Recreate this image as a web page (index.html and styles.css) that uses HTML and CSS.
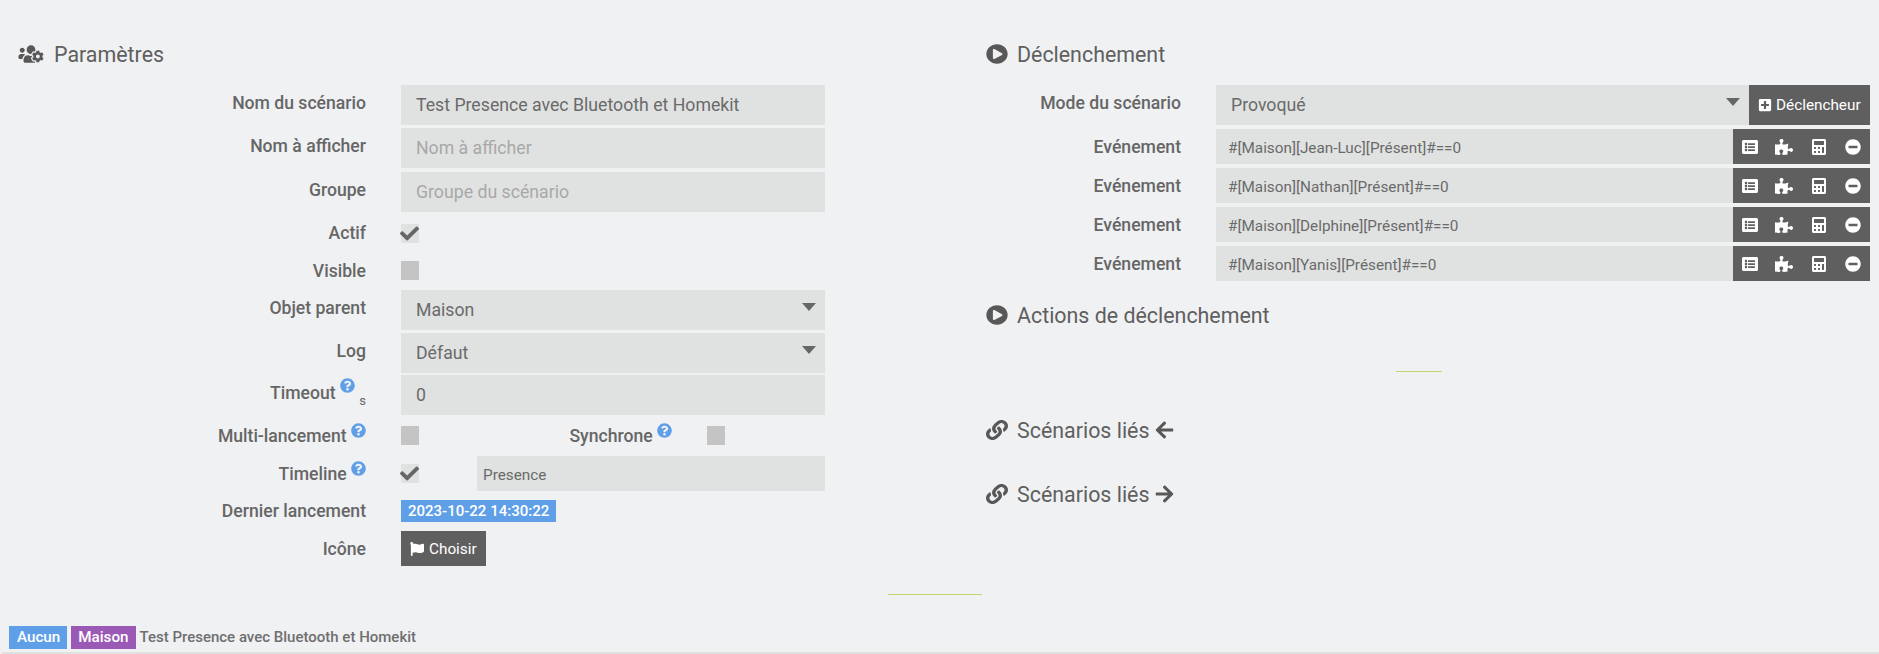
FILE: index.html
```html
<!DOCTYPE html>
<html lang="fr">
<head>
<meta charset="utf-8">
<title>Scénario</title>
<link rel="stylesheet" href="styles.css">
</head>
<body>
<svg class="sprite" xmlns="http://www.w3.org/2000/svg">
<symbol id="i-users-cog" viewBox="0 0 640 512"><path d="M610.5 341.3c2.6-14.1 2.6-28.5 0-42.6l25.8-14.9c3-1.7 4.3-5.2 3.3-8.5-6.7-21.5-18.2-41-33.2-57.1-2.3-2.5-6-3.1-9-1.4l-25.8 14.9c-10.9-9.3-23.4-16.5-36.9-21.3v-29.8c0-3.4-2.4-6.4-5.7-7.1-22.3-5-45-4.8-66.2 0-3.3.7-5.7 3.7-5.7 7.1v29.8c-13.5 4.8-26 12-36.9 21.3l-25.8-14.9c-2.9-1.7-6.7-1.1-9 1.4-15 16.1-26.5 35.6-33.2 57.1-1 3.3.4 6.8 3.3 8.5l25.8 14.9c-2.6 14.1-2.6 28.5 0 42.6l-25.8 14.9c-3 1.7-4.3 5.2-3.3 8.5 6.7 21.5 18.2 41 33.2 57.1 2.3 2.5 6 3.1 9 1.4l25.8-14.9c10.9 9.3 23.4 16.5 36.9 21.3v29.8c0 3.4 2.4 6.4 5.7 7.1 22.3 5 45 4.8 66.2 0 3.3-.7 5.7-3.7 5.7-7.1v-29.8c13.5-4.8 26-12 36.9-21.3l25.8 14.9c2.9 1.7 6.7 1.1 9-1.4 15-16.1 26.5-35.6 33.2-57.1 1-3.3-.4-6.8-3.3-8.5l-25.8-14.9zM496 368.5c-26.8 0-48.5-21.8-48.5-48.5s21.8-48.5 48.5-48.5 48.5 21.8 48.5 48.5-21.7 48.5-48.5 48.5zM96 224c35.3 0 64-28.7 64-64s-28.7-64-64-64-64 28.7-64 64 28.7 64 64 64zm224 32c1.9 0 3.7-.5 5.6-.6 8.3-21.7 20.5-42.1 36.3-59.2 7.4-8 17.9-12.6 28.9-12.6 6.9 0 13.7 1.8 19.6 5.3l7.9 4.6c.8-.5 1.6-.9 2.4-1.4 7-14.6 11.2-30.8 11.2-48 0-61.9-50.1-112-112-112S208 82.1 208 144c0 61.9 50.1 112 112 112zm105.2 194.5c-2.3-1.2-4.6-2.6-6.8-3.9-8.2 4.8-15.3 9.8-27.5 9.8-10.9 0-21.4-4.6-28.9-12.6-18.3-19.8-32.3-43.9-40.2-69.6-10.7-34.5 24.9-49.7 25.8-50.3-.1-2.6-.1-5.2 0-7.8l-7.9-4.6c-3.8-2.2-7-5-9.8-8.1-3.3.2-6.5.6-9.8.6-24.6 0-47.6-6-68.5-16h-8.3C179.6 288 128 339.6 128 403.2V432c0 26.5 21.5 48 48 48h255.4c-3.7-6-6.2-12.8-6.2-20.3v-9.2zM173.1 274.6C161.5 263.1 145.6 256 128 256H64c-35.3 0-64 28.7-64 64v32c0 17.7 14.3 32 32 32h65.9c6.3-47.4 34.9-87.3 75.2-109.4z"/></symbol>
<symbol id="i-play" viewBox="0 0 512 512" preserveAspectRatio="none"><path d="M256 8C119 8 8 119 8 256s111 248 248 248 248-111 248-248S393 8 256 8zm115.7 272l-176 101c-15.8 8.8-35.7-2.5-35.7-21V152c0-18.4 19.8-29.8 35.7-21l176 107c16.4 9.2 16.4 32.8 0 42z"/></symbol>
<symbol id="i-link" viewBox="0 0 512 512" preserveAspectRatio="none"><path d="M326.612 185.391c59.747 59.809 58.927 155.698.36 214.59-.11.12-.24.25-.36.37l-67.2 67.2c-59.27 59.27-155.699 59.262-214.96 0-59.27-59.26-59.27-155.7 0-214.96l37.106-37.106c9.84-9.84 26.786-3.3 27.294 10.606.648 17.722 3.826 35.527 9.69 52.721 1.986 5.822.567 12.262-3.783 16.612l-13.087 13.087c-28.026 28.026-28.905 73.66-1.155 101.96 28.024 28.579 74.086 28.749 102.325.51l67.2-67.19c28.191-28.191 28.073-73.757 0-101.83-3.701-3.694-7.429-6.564-10.341-8.569a16.037 16.037 0 0 1-6.947-12.606c-.396-10.567 3.348-21.456 11.698-29.806l21.054-21.055c5.521-5.521 14.182-6.199 20.584-1.731a152.482 152.482 0 0 1 20.522 17.197zM467.547 44.449c-59.261-59.262-155.69-59.27-214.96 0l-67.2 67.2c-.12.12-.25.25-.36.37-58.566 58.892-59.387 154.781.36 214.59a152.454 152.454 0 0 0 20.521 17.196c6.402 4.468 15.064 3.789 20.584-1.731l21.054-21.055c8.35-8.35 12.094-19.239 11.698-29.806a16.037 16.037 0 0 0-6.947-12.606c-2.912-2.005-6.64-4.875-10.341-8.569-28.073-28.073-28.191-73.639 0-101.83l67.2-67.19c28.239-28.239 74.3-28.069 102.325.51 27.75 28.3 26.872 73.934-1.155 101.96l-13.087 13.087c-4.35 4.35-5.769 10.79-3.783 16.612 5.864 17.194 9.042 34.999 9.69 52.721.509 13.906 17.454 20.446 27.294 10.606l37.106-37.106c59.271-59.259 59.271-155.699.001-214.959z"/></symbol>
<symbol id="i-left" viewBox="0 0 448 512"><path d="M257.5 445.1l-22.2 22.2c-9.4 9.4-24.6 9.4-33.9 0L7 273c-9.4-9.4-9.4-24.6 0-33.9L201.4 44.7c9.4-9.4 24.6-9.4 33.9 0l22.2 22.2c9.5 9.5 9.3 25-.4 34.3L136.6 216H424c13.3 0 24 10.7 24 24v32c0 13.3-10.7 24-24 24H136.6l120.5 114.8c9.8 9.3 10 24.8.4 34.3z"/></symbol>
<symbol id="i-right" viewBox="0 0 448 512"><path d="M190.5 66.9l22.2-22.2c9.4-9.4 24.6-9.4 33.9 0L441 239c9.4 9.4 9.4 24.6 0 33.9L246.6 467.3c-9.4 9.4-24.6 9.4-33.9 0l-22.2-22.2c-9.5-9.5-9.3-25 .4-34.3L311.4 296H24c-13.3 0-24-10.7-24-24v-32c0-13.3 10.7-24 24-24h287.4L190.9 101.2c-9.8-9.3-10-24.8-.4-34.3z"/></symbol>
<symbol id="i-check" viewBox="0 0 512 512"><path d="M173.898 439.404l-166.4-166.4c-9.997-9.997-9.997-26.206 0-36.204l36.203-36.204c9.997-9.998 26.207-9.998 36.204 0L192 312.69 432.095 72.596c9.997-9.997 26.207-9.997 36.204 0l36.203 36.204c9.997 9.997 9.997 26.206 0 36.204l-294.4 294.401c-9.998 9.997-26.207 9.997-36.204-.001z"/></symbol>
<symbol id="i-flag" viewBox="0 0 512 512"><path d="M349.565 98.783C295.978 98.783 251.721 64 184.348 64c-24.955 0-47.309 4.384-68.045 12.013a55.947 55.947 0 0 0 3.586-23.562C118.117 24.015 94.806 1.206 66.338.048 34.345-1.254 8 24.296 8 56c0 19.026 9.497 35.825 24 45.945V488c0 13.255 10.745 24 24 24h16c13.255 0 24-10.745 24-24v-94.4c28.311-12.064 63.582-22.122 114.435-22.122 53.588 0 97.844 34.783 165.217 34.783 48.169 0 86.667-16.294 122.505-40.858C506.84 359.452 512 349.571 512 339.045v-243.1c0-23.393-24.269-38.87-45.485-29.016-34.338 15.948-76.454 31.854-116.95 31.854z"/></symbol>
<symbol id="i-plus" viewBox="0 0 448 512"><path d="M400 32H48C21.5 32 0 53.5 0 80v352c0 26.5 21.5 48 48 48h352c26.5 0 48-21.5 48-48V80c0-26.5-21.5-48-48-48zm-32 252c0 6.6-5.4 12-12 12h-92v92c0 6.6-5.4 12-12 12h-56c-6.6 0-12-5.4-12-12v-92H92c-6.6 0-12-5.4-12-12v-56c0-6.6 5.4-12 12-12h92v-92c0-6.6 5.4-12 12-12h56c6.6 0 12 5.4 12 12v92h92c6.6 0 12 5.4 12 12v56z"/></symbol>
<symbol id="i-list" viewBox="0 0 512 512"><path d="M464 480H48c-26.51 0-48-21.49-48-48V80c0-26.51 21.49-48 48-48h416c26.51 0 48 21.49 48 48v352c0 26.51-21.49 48-48 48zM128 120c-22.091 0-40 17.909-40 40s17.909 40 40 40 40-17.909 40-40-17.909-40-40-40zm0 96c-22.091 0-40 17.909-40 40s17.909 40 40 40 40-17.909 40-40-17.909-40-40-40zm0 96c-22.091 0-40 17.909-40 40s17.909 40 40 40 40-17.909 40-40-17.909-40-40-40zm288-136v-32c0-6.627-5.373-12-12-12H204c-6.627 0-12 5.373-12 12v32c0 6.627 5.373 12 12 12h200c6.627 0 12-5.373 12-12zm0 96v-32c0-6.627-5.373-12-12-12H204c-6.627 0-12 5.373-12 12v32c0 6.627 5.373 12 12 12h200c6.627 0 12-5.373 12-12zm0 96v-32c0-6.627-5.373-12-12-12H204c-6.627 0-12 5.373-12 12v32c0 6.627 5.373 12 12 12h200c6.627 0 12-5.373 12-12z"/></symbol>
<symbol id="i-puzzle" viewBox="0 0 576 512"><path d="M519.442 288.651c-41.519 0-59.5 31.593-82.058 31.593C377.409 320.244 432 144 432 144s-196.288 80-196.288-3.297c0-35.827 36.288-46.25 36.288-85.985C272 19.216 243.885 0 210.539 0c-34.654 0-66.366 18.891-66.366 56.346 0 41.364 31.711 59.277 31.711 81.75C175.885 207.719 0 166.758 0 166.758v333.237s178.635 41.047 178.635-28.662c0-22.473-40-40.107-40-81.471 0-37.456 29.25-56.346 63.577-56.346 33.673 0 61.788 19.216 61.788 54.717 0 39.735-36.288 50.158-36.288 85.985 0 60.803 129.675 25.73 181.23 25.73 0 0-34.725-120.101 25.827-120.101 35.962 0 46.423 36.152 86.308 36.152C556.712 416 576 387.99 576 354.443c0-34.199-18.962-65.792-56.558-65.792z"/></symbol>
<symbol id="i-calc" viewBox="0 0 448 512"><path d="M400 0H48C22.4 0 0 22.4 0 48v416c0 25.6 22.4 48 48 48h352c25.6 0 48-22.4 48-48V48c0-25.6-22.4-48-48-48zM128 435c0 6.4-6.4 12.8-12.8 12.8H76.8c-6.4 0-12.8-6.4-12.8-12.8v-38.4c0-6.4 6.4-12.8 12.8-12.8h38.4c6.4 0 12.8 6.4 12.8 12.8V435zm0-128c0 6.4-6.4 12.8-12.8 12.8H76.8c-6.4 0-12.8-6.4-12.8-12.8v-38.4c0-6.4 6.4-12.8 12.8-12.8h38.4c6.4 0 12.8 6.4 12.8 12.8V307zm128 128c0 6.4-6.4 12.8-12.8 12.8h-38.4c-6.4 0-12.8-6.4-12.8-12.8v-38.4c0-6.4 6.4-12.8 12.8-12.8h38.4c6.4 0 12.8 6.4 12.8 12.8V435zm0-128c0 6.4-6.4 12.8-12.8 12.8h-38.4c-6.4 0-12.8-6.4-12.8-12.8v-38.4c0-6.4 6.4-12.8 12.8-12.8h38.4c6.4 0 12.8 6.4 12.8 12.8V307zm128 128c0 6.4-6.4 12.8-12.8 12.8h-38.4c-6.4 0-12.8-6.4-12.8-12.8V268.8c0-6.4 6.4-12.8 12.8-12.8h38.4c6.4 0 12.8 6.4 12.8 12.8V435zm0-256c0 6.4-6.4 12.8-12.8 12.8H76.8c-6.4 0-12.8-6.4-12.8-12.8V76.8C64 70.4 70.4 64 76.8 64h294.4c6.4 0 12.8 6.4 12.8 12.8V179z"/></symbol>
<symbol id="i-minus" viewBox="0 0 512 512"><path d="M256 8C119 8 8 119 8 256s111 248 248 248 248-111 248-248S393 8 256 8zM124 296c-6.6 0-12-5.4-12-12v-56c0-6.6 5.4-12 12-12h264c6.6 0 12 5.4 12 12v56c0 6.6-5.4 12-12 12H124z"/></symbol>
<symbol id="i-help" viewBox="0 0 512 512"><path d="M504 256c0 136.997-111.043 248-248 248S8 392.997 8 256C8 119.083 119.043 8 256 8s248 111.083 248 248zM262.655 90c-54.497 0-89.255 22.957-116.549 63.758-3.536 5.286-2.353 12.415 2.715 16.258l34.699 26.31c5.205 3.947 12.621 3.008 16.665-2.122 17.864-22.658 30.113-35.797 57.303-35.797 20.429 0 45.698 13.148 45.698 32.958 0 14.976-12.363 22.667-32.534 33.976C247.128 238.528 216 254.941 216 296v4c0 6.627 5.373 12 12 12h56c6.627 0 12-5.373 12-12v-1.333c0-28.462 83.186-29.647 83.186-106.667 0-58.002-60.165-102-116.531-102zM256 338c-25.365 0-46 20.635-46 46 0 25.364 20.635 46 46 46s46-20.636 46-46c0-25.365-20.635-46-46-46z"/></symbol>
</svg>
<main class="columns">
  <section class="left">
    <h3 class="heading"><svg class="hicon wide"><use href="#i-users-cog"/></svg>Paramètres</h3>
    <form class="form">
      <label class="lab">Nom du scénario</label>
      <input class="field" type="text" value="Test Presence avec Bluetooth et Homekit">
      <label class="lab">Nom à afficher</label>
      <input class="field" type="text" placeholder="Nom à afficher">
      <label class="lab">Groupe</label>
      <input class="field" type="text" placeholder="Groupe du scénario">
      <label class="lab tight">Actif</label>
      <span class="check on"><svg><use href="#i-check"/></svg></span>
      <label class="lab">Visible</label>
      <span class="check"></span>
      <label class="lab">Objet parent</label>
      <div class="field select">Maison</div>
      <label class="lab">Log</label>
      <div class="field select">Défaut</div>
      <label class="lab">Timeout <svg class="help up"><use href="#i-help"/></svg> <sub class="unit">s</sub></label>
      <input class="field" type="text" value="0">
      <label class="lab">Multi-lancement <svg class="help"><use href="#i-help"/></svg></label>
      <div class="multi">
        <span class="check"></span>
        <label class="lab sync">Synchrone <svg class="help"><use href="#i-help"/></svg></label>
        <span class="check"></span>
      </div>
      <label class="lab">Timeline <svg class="help"><use href="#i-help"/></svg></label>
      <div class="timeline">
        <span class="check on"><svg><use href="#i-check"/></svg></span>
        <input class="field small" type="text" value="Presence">
      </div>
      <label class="lab">Dernier lancement</label>
      <div><span class="tag date">2023-10-22 14:30:22</span></div>
      <label class="lab">Icône</label>
      <div><button class="btn choose" type="button"><svg class="bicon"><use href="#i-flag"/></svg>Choisir</button></div>
    </form>
    <div class="rule rule-left"></div>
  </section>
  <section class="right">
    <h3 class="heading"><svg class="hicon"><use href="#i-play"/></svg>Déclenchement</h3>
    <div class="triggers">
      <label class="lab">Mode du scénario</label>
      <div class="group">
        <div class="field select grow">Provoqué</div>
        <button class="btn add" type="button"><svg class="bicon"><use href="#i-plus"/></svg>Déclencheur</button>
      </div>
      <label class="lab">Evénement</label>
      <div class="group ev">
        <input class="field small grow" type="text" value="#[Maison][Jean-Luc][Présent]#==0">
        <div class="tools"><svg><use href="#i-list"/></svg><svg><use href="#i-puzzle"/></svg><svg><use href="#i-calc"/></svg><svg><use href="#i-minus"/></svg></div>
      </div>
      <label class="lab">Evénement</label>
      <div class="group ev">
        <input class="field small grow" type="text" value="#[Maison][Nathan][Présent]#==0">
        <div class="tools"><svg><use href="#i-list"/></svg><svg><use href="#i-puzzle"/></svg><svg><use href="#i-calc"/></svg><svg><use href="#i-minus"/></svg></div>
      </div>
      <label class="lab">Evénement</label>
      <div class="group ev">
        <input class="field small grow" type="text" value="#[Maison][Delphine][Présent]#==0">
        <div class="tools"><svg><use href="#i-list"/></svg><svg><use href="#i-puzzle"/></svg><svg><use href="#i-calc"/></svg><svg><use href="#i-minus"/></svg></div>
      </div>
      <label class="lab">Evénement</label>
      <div class="group ev">
        <input class="field small grow" type="text" value="#[Maison][Yanis][Présent]#==0">
        <div class="tools"><svg><use href="#i-list"/></svg><svg><use href="#i-puzzle"/></svg><svg><use href="#i-calc"/></svg><svg><use href="#i-minus"/></svg></div>
      </div>
    </div>
    <h3 class="heading actions"><svg class="hicon"><use href="#i-play"/></svg>Actions de déclenchement</h3>
    <div class="rule rule-right"></div>
    <h3 class="heading linked-a"><svg class="hicon"><use href="#i-link"/></svg>Scénarios liés<svg class="arrow"><use href="#i-left"/></svg></h3>
    <h3 class="heading linked-b"><svg class="hicon"><use href="#i-link"/></svg>Scénarios liés<svg class="arrow"><use href="#i-right"/></svg></h3>
  </section>
</main>
<footer class="foot">
  <span class="tag aucun">Aucun</span><span class="tag maison">Maison</span><span class="foot-name">Test Presence avec Bluetooth et Homekit</span>
</footer>
</body>
</html>
```
FILE: styles.css
```css
* { box-sizing: border-box; }
html, body { margin: 0; height: 654px; overflow: hidden; }
body {
  background: #f0f1f3;
  color: #666;
  font-family: Roboto, "Liberation Sans", sans-serif;
  font-size: 16px;
  display: flex;
  flex-direction: column;
}
.sprite { display: none; }
svg { fill: currentColor; }

.columns { display: grid; grid-template-columns: 986px 884px; height: 616px; padding-top: 34px; flex: none; }
.left { padding-left: 18px; }
.right { min-width: 0; }

.heading { margin: 0; height: 40px; display: flex; align-items: center; font-size: 21.4px; font-weight: 400; color: #5f5f5f; }
.hicon { width: 22px; height: 20px; margin-right: 9px; color: #585858; flex: none; }
.hicon.wide { width: 26px; margin-right: 10px; }
.arrow { width: 19px; height: 20px; margin-left: 6px; color: #585858; }

.form {
  margin-top: 11px;
  margin-left: -18px;
  width: 825px;
  display: grid;
  grid-template-columns: 366px 424px;
  column-gap: 35px;
  grid-template-rows: 43px 44px 44px 37px 37px 43px 42px 43px 38px 37px 38px 35px;
}
.lab { display: block; text-align: right; font-size: 17.6px; font-weight: 500; line-height: 36px; color: #666; white-space: nowrap; }
.lab.tight { line-height: 34px; }
.field {
  display: block;
  width: 100%;
  height: 40px;
  border: 0;
  border-radius: 0;
  outline: 0;
  background: #e0e2e1;
  color: #6a6a6a;
  font: 400 17.7px/40px Roboto, sans-serif;
  padding: 0 15px;
}
.field::placeholder { color: #a8a8a8; opacity: 1; }
.field.small { font-size: 15.3px; padding: 2px 12px 0; height: 35px; line-height: 33px; }
.select { position: relative; }
.select::after {
  content: "";
  position: absolute;
  right: 9px;
  top: 13px;
  border-left: 7.5px solid transparent;
  border-right: 7.5px solid transparent;
  border-top: 8px solid #666;
}

.check { display: block; width: 18px; height: 19px; margin-top: 8px; background: #c4c4c4; }
.check.on { background: #e0e2e1; color: #666; }
.check svg { display: block; width: 19px; height: 19px; margin-left: -1px; }

.help { width: 15px; height: 15px; color: #5f9fe8; display: inline-block; vertical-align: 4px; }
.help.up { vertical-align: 6px; }
.unit { font-size: 13px; font-weight: 400; vertical-align: -6px; line-height: 0; }

.multi { display: flex; }
.sync { width: 253px; text-align: right; flex: none; }
.multi .check:last-child { margin-left: 35px; }
.timeline { display: flex; }
.timeline .small { margin-left: 58px; width: 348px; padding: 2px 6px 0; }

.tag { display: inline-block; background: #5f9fe8; color: #fff; font-size: 15.2px; font-weight: 500; white-space: nowrap; }
.tag.date { font-size: 15px; margin-top: 7px; height: 22px; line-height: 22px; padding: 0 7px; }

.btn { border: 0; background: #5f5f5f; color: #fff; font: 400 15.3px Roboto, sans-serif; display: flex; align-items: center; padding: 0; }
.bicon { width: 14px; height: 14px; flex: none; }
.choose { width: 85px; height: 35px; padding-left: 9px; }
.choose .bicon { margin-right: 5px; }

.rule { height: 1px; background: #bcd86f; }
.rule-left { width: 94px; margin: 28px 0 0 870px; }
.rule-right { width: 46px; margin: 36px 0 0 410px; }

.triggers {
  margin-top: 11px;
  display: grid;
  grid-template-columns: 195px 654px;
  column-gap: 35px;
  grid-template-rows: 44px 39px 39px 39px 39px;
}
.group { display: flex; height: 40px; }
.group.ev { height: 35px; }
.grow { flex: 1; min-width: 0; width: auto; }
.add { width: 121px; height: 40px; padding-left: 9px; flex: none; }
.add .bicon { margin-right: 4px; }
.tools { width: 137px; flex: none; background: #5f5f5f; color: #fff; display: grid; grid-template-columns: repeat(4, 1fr); align-items: center; justify-items: center; }
.tools svg { width: 18px; height: 16px; }

.actions { margin-top: 10px; }
.linked-a { margin-top: 38px; }
.linked-b { margin-top: 24px; }

.foot { display: flex; align-items: flex-start; flex: none; height: 28px; margin: 10px 0 0 2px; padding: 0 0 3px 7px; gap: 4px; border-bottom: 2px solid #e0e2e1; }
.foot .tag { height: 23px; line-height: 23px; padding: 0 7px; }
.foot .aucun { padding: 0 7px 0 8px; }
.maison { background: #9b59b6; }
.foot-name { font-size: 15px; font-weight: 500; color: #6f6f6f; line-height: 23px; }
```
